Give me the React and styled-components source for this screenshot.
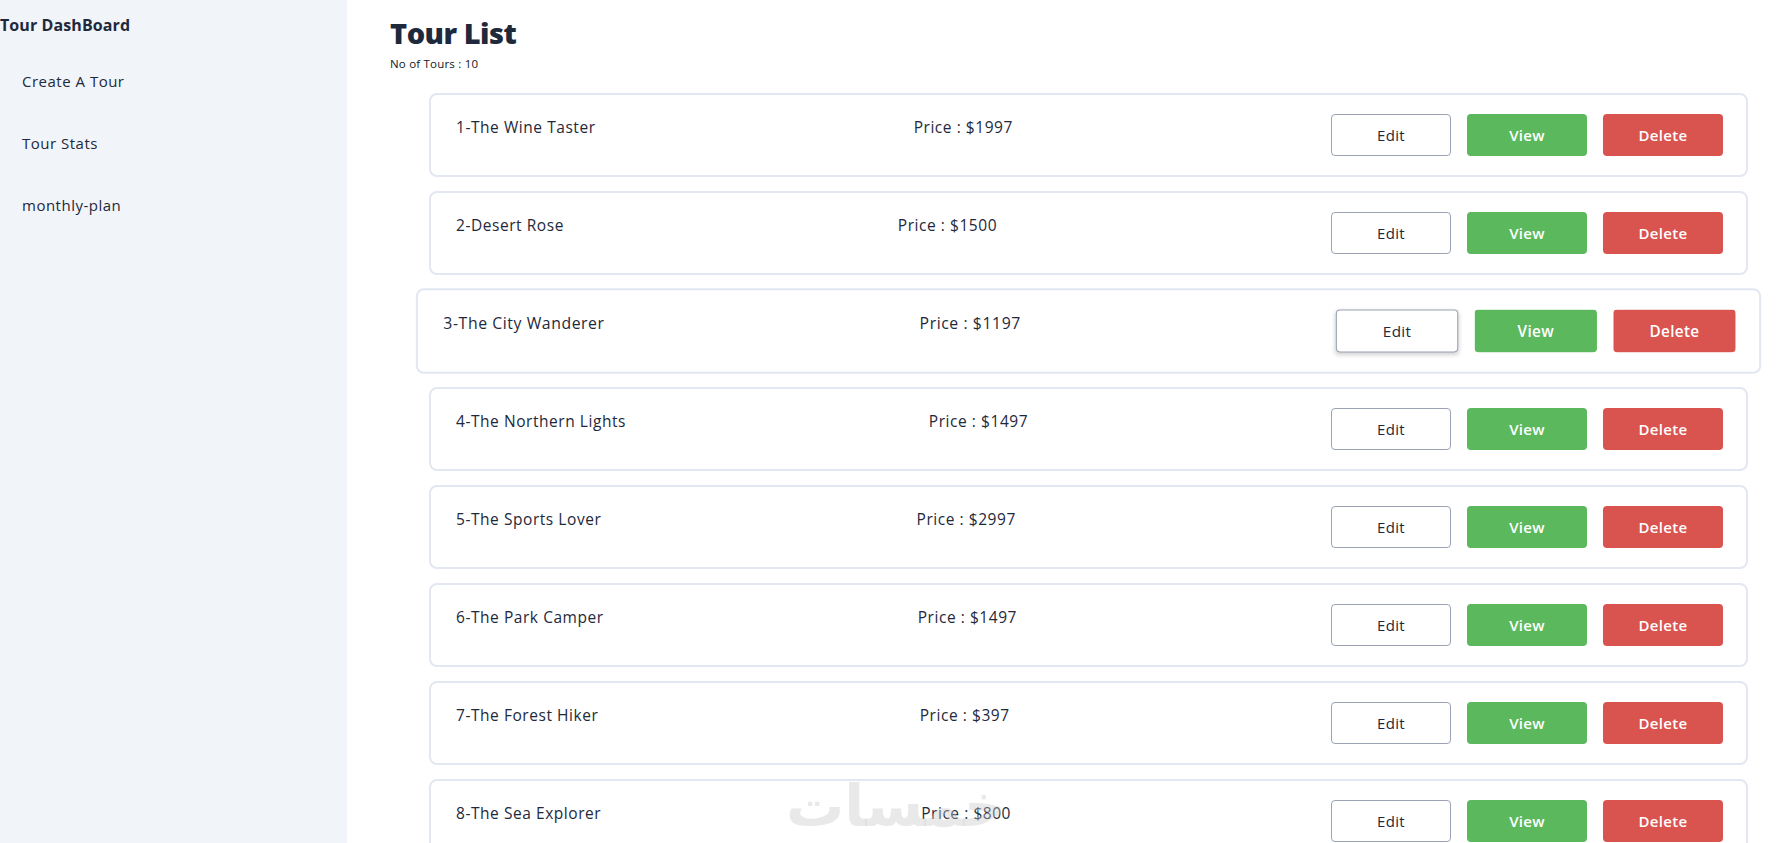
import React from 'react';
import styled, { createGlobalStyle, css } from 'styled-components';

const GlobalStyle = createGlobalStyle`
  html, body {
    margin: 0;
    padding: 0;
    overflow: hidden;
    background: #ffffff;
  }
  body {
    font-family: "Open Sans", "Noto Sans", sans-serif;
    color: #1e293b;
  }
`;

const Layout = styled.div`
  display: flex;
  height: 100vh;
  overflow: hidden;
  position: relative;
`;

const Sidebar = styled.aside`
  width: 347px;
  flex-shrink: 0;
  background: #f1f4f9;
  padding-top: 15px;
`;

const Brand = styled.h2`
  margin: 0;
  font-size: 16px;
  line-height: 20px;
  font-weight: 700;
  color: #1e293b;
  letter-spacing: 0.1px;
`;

const NavList = styled.ul`
  list-style: none;
  margin: 36px 0 0;
  padding: 0 0 0 22px;
  display: flex;
  flex-direction: column;
  gap: 42px;
`;

const NavItem = styled.li`
  font-size: 15px;
  line-height: 20px;
  color: #1e293b;
  letter-spacing: 0.5px;
`;

const Main = styled.main`
  flex: 1;
  padding: 14px 38px 0 43px;
  overflow: hidden;
`;

const Title = styled.h1`
  margin: 0;
  font-size: 29px;
  line-height: 38px;
  font-weight: 800;
  color: #1e293b;
  letter-spacing: -0.5px;
`;

const Count = styled.p`
  margin: 5px 0 0;
  font-size: 11.5px;
  line-height: 14px;
  color: #111827;
  letter-spacing: 0.2px;
`;

const List = styled.div`
  margin: 22px 0 0 39px;
  display: flex;
  flex-direction: column;
  gap: 14px;
`;

const Card = styled.div`
  box-sizing: border-box;
  height: 84px;
  border: 2px solid #e2e7f1;
  border-radius: 8px;
  background: #fff;
  display: flex;
  justify-content: space-between;
  align-items: flex-start;
  padding: 0 23px 0 25px;
  flex-shrink: 0;
  ${(p) =>
    p.$active &&
    css`
      transform: scale(1.02);
    `}
`;

const Text = styled.span`
  margin-top: 20px;
  font-size: 15.5px;
  line-height: 24px;
  color: #1e293b;
  letter-spacing: 0.55px;
`;

const Actions = styled.div`
  align-self: center;
  display: flex;
  gap: 16px;
`;

const Button = styled.button`
  box-sizing: border-box;
  width: 120px;
  height: 42px;
  border-radius: 4px;
  font-family: inherit;
  font-size: 15px;
  font-weight: 500;
  letter-spacing: 0.3px;
  cursor: pointer;
  border: 1px solid transparent;
  ${(p) =>
    p.$variant === 'edit' &&
    css`
      background: #fff;
      border-color: #9aa2b4;
      color: #1e293b;
      box-shadow: ${p.$shadow ? '0 2px 4px rgba(0,0,0,0.18)' : 'none'};
    `}
  ${(p) =>
    p.$variant === 'view' &&
    css`
      background: #5cb85c;
      color: #fff;
      font-weight: 600;
    `}
  ${(p) =>
    p.$variant === 'delete' &&
    css`
      background: #d9534f;
      color: #fff;
      font-weight: 600;
    `}
`;

const Watermark = styled.div`
  position: absolute;
  left: 786px;
  top: 772px;
  font-family: "DejaVu Sans", sans-serif;
  font-size: 58px;
  font-weight: 700;
  color: rgba(200, 200, 200, 0.4);
  pointer-events: none;
  direction: rtl;
`;

const tours = [
  { name: 'The Wine Taster', price: 1997 },
  { name: 'Desert Rose', price: 1500 },
  { name: 'The City Wanderer', price: 1197 },
  { name: 'The Northern Lights', price: 1497 },
  { name: 'The Sports Lover', price: 2997 },
  { name: 'The Park Camper', price: 1497 },
  { name: 'The Forest Hiker', price: 397 },
  { name: 'The Sea Explorer', price: 800 },
  { name: 'The Snow Adventurer', price: 997 },
  { name: 'The Star Gazer', price: 2997 },
];

export default function App() {
  return (
    <>
      <GlobalStyle />
      <Layout>
        <Sidebar>
          <Brand>Tour DashBoard</Brand>
          <NavList>
            <NavItem>Create A Tour</NavItem>
            <NavItem>Tour Stats</NavItem>
            <NavItem>monthly-plan</NavItem>
          </NavList>
        </Sidebar>
        <Main>
          <Title>Tour List</Title>
          <Count>No of Tours : {tours.length}</Count>
          <List>
            {tours.map((t, i) => (
              <Card key={t.name} $active={i === 2}>
                <Text>
                  {i + 1}-{t.name}
                </Text>
                <Text>Price : ${t.price}</Text>
                <Actions>
                  <Button $variant="edit" $shadow={i === 2}>Edit</Button>
                  <Button $variant="view">View</Button>
                  <Button $variant="delete">Delete</Button>
                </Actions>
              </Card>
            ))}
          </List>
        </Main>
        <Watermark>خمسات</Watermark>
      </Layout>
    </>
  );
}
